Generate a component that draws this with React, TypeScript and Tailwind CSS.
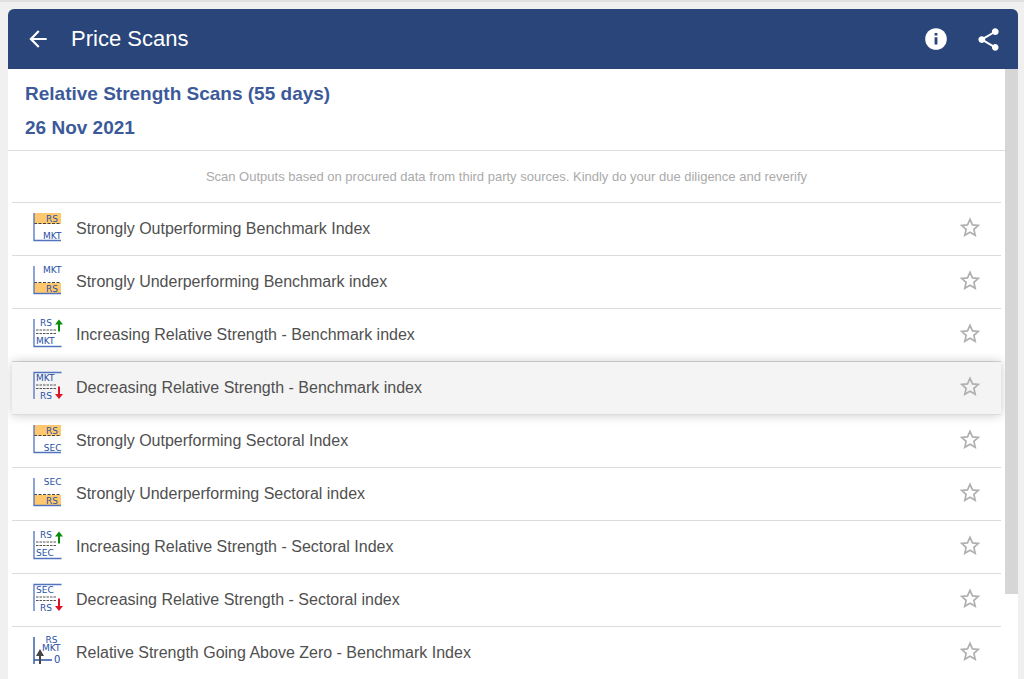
import React from 'react';
import { MdArrowBack, MdShare } from 'react-icons/md';

type IconKind = 'above' | 'below' | 'rising' | 'falling' | 'crossing';

interface Scan {
  title: string;
  kind: IconKind;
  label: string;
  active?: boolean;
}

const scans: Scan[] = [
  { title: 'Strongly Outperforming Benchmark Index', kind: 'above', label: 'MKT' },
  { title: 'Strongly Underperforming Benchmark index', kind: 'below', label: 'MKT' },
  { title: 'Increasing Relative Strength - Benchmark index', kind: 'rising', label: 'MKT' },
  { title: 'Decreasing Relative Strength - Benchmark index', kind: 'falling', label: 'MKT', active: true },
  { title: 'Strongly Outperforming Sectoral Index', kind: 'above', label: 'SEC' },
  { title: 'Strongly Underperforming Sectoral index', kind: 'below', label: 'SEC' },
  { title: 'Increasing Relative Strength - Sectoral Index', kind: 'rising', label: 'SEC' },
  { title: 'Decreasing Relative Strength - Sectoral index', kind: 'falling', label: 'SEC' },
  { title: 'Relative Strength Going Above Zero - Benchmark Index', kind: 'crossing', label: 'MKT' },
];

const InfoIcon: React.FC = () => (
  <svg viewBox="0 0 26 26" className="size-[26px]" aria-hidden="true">
    <circle cx="13" cy="13" r="10.8" fill="#fff" />
    <path d="M11.6 7H14.4V9.6H11.6ZM11.6 11.2H14.4V18.6H11.6Z" fill="#29457a" />
  </svg>
);

const StarIcon: React.FC = () => (
  <svg viewBox="0 0 24 24" className="size-6" aria-hidden="true">
    <path
      d="M12 4.4L14.5 9.9L20.3 10.4L15.9 14.4L17.2 20.3L12 17.3L6.8 20.3L8.1 14.4L3.7 10.4L9.5 9.9Z"
      fill="none"
      stroke="currentColor"
      strokeWidth="1.7"
      strokeMiterlimit="10"
    />
  </svg>
);

const ScanIcon: React.FC<{ kind: IconKind; label: string }> = ({ kind, label }) => (
  <svg
    viewBox="0 0 30 30"
    className="size-[30px] shrink-0 overflow-visible font-['DejaVu_Sans',sans-serif] text-[9px]"
    fill="#2750a4"
    aria-hidden="true"
  >
    {kind === 'above' && (
      <>
        <rect x="2" y="1" width="27" height="11" fill="#ffc86e" />
        <path d="M2 11.5H29" stroke="#444" strokeDasharray="3 1.5" />
        <path d="M2 1V28.5H29" fill="none" stroke="#5273bd" strokeWidth="1.3" />
        <text x="26" y="10" textAnchor="end">RS</text>
        <text x="29.5" y="26.5" textAnchor="end">{label}</text>
      </>
    )}
    {kind === 'below' && (
      <>
        <rect x="2" y="18" width="27" height="10.5" fill="#ffc86e" />
        <path d="M2 17.5H29" stroke="#444" strokeDasharray="3 1.5" />
        <path d="M2 1V28.5H29" fill="none" stroke="#5273bd" strokeWidth="1.3" />
        <text x="29.5" y="8" textAnchor="end">{label}</text>
        <text x="26" y="27" textAnchor="end">RS</text>
      </>
    )}
    {kind === 'rising' && (
      <>
        <path d="M2 1V28.5H29.5" fill="none" stroke="#5273bd" strokeWidth="1.3" />
        <text x="8" y="8">RS</text>
        <path d="M4 12H24M4 15.5H24" stroke="#555" strokeDasharray="2.5 1" />
        <text x="4" y="26">{label}</text>
        <path d="M27 1.5L31 6.5H28V13.5H26V6.5H23Z" fill="#0a8a0a" />
      </>
    )}
    {kind === 'falling' && (
      <>
        <path d="M2 28V1.5H29.5" fill="none" stroke="#5273bd" strokeWidth="1.3" />
        <text x="4" y="10">{label}</text>
        <path d="M4 14H24M4 17.5H24" stroke="#555" strokeDasharray="2.5 1" />
        <text x="8" y="28">RS</text>
        <path d="M27 28L31 23H28V15.5H26V23H23Z" fill="#dc1428" />
      </>
    )}
    {kind === 'crossing' && (
      <>
        <path d="M2 1V28M2 24H20" fill="none" stroke="#2f55a4" strokeWidth="1.4" />
        <text x="13.5" y="7">RS</text>
        <text x="10" y="15">{label}</text>
        <text x="22" y="27" className="text-[10px]">0</text>
        <path d="M8 13L12 20H9V28H7V20H4Z" fill="#444" />
      </>
    )}
  </svg>
);

const ScanRow: React.FC<{ scan: Scan }> = ({ scan }) => (
  <li
    className={`flex h-[53px] shrink-0 items-center border-b border-[#dcdcdc] pr-[19px] pb-1 pl-5 ${
      scan.active ? 'relative bg-[#f4f4f4] shadow-[0_0_10px_rgba(0,0,0,0.22)]' : ''
    }`}
  >
    <a href="#scan" className="flex flex-1 items-center gap-3.5">
      <ScanIcon kind={scan.kind} label={scan.label} />
      <span className="pt-1 text-base text-[#505050]">{scan.title}</span>
    </a>
    <button type="button" aria-label={`Add ${scan.title} to favourites`} className="text-[#b0b0b0]">
      <StarIcon />
    </button>
  </li>
);

const App: React.FC = () => {
  return (
    <div className="flex h-screen flex-col overflow-hidden border-t-2 border-[#e0e0e0] bg-[#f0f0f0] pt-[7px] pr-1.5 pl-2 font-['Liberation_Sans',Arial,sans-serif]">
      <header className="flex h-[60px] shrink-0 items-center rounded-t-md bg-[#29457a] pr-4 pl-[17px] text-white">
        <button type="button" aria-label="Back">
          <MdArrowBack className="size-[26px]" />
        </button>
        <h1 className="ml-5 flex-1 pb-px text-[22px]">Price Scans</h1>
        <div className="flex items-center gap-[26px]">
          <button type="button" aria-label="Information">
            <InfoIcon />
          </button>
          <button type="button" aria-label="Share">
            <MdShare className="size-[27px]" />
          </button>
        </div>
      </header>
      <div className="flex min-h-0 flex-1 bg-white">
        <main className="flex min-w-0 flex-1 flex-col overflow-hidden">
          <div className="shrink-0 border-b border-[#dcdcdc] px-[17px] pt-2 pb-[5px] text-[19px] leading-[34px] font-bold text-[#3c5a9a]">
            <h2>Relative Strength Scans (55 days)</h2>
            <p>26 Nov 2021</p>
          </div>
          <p className="flex h-[51px] shrink-0 items-center justify-center text-[13px] text-[#aaaaaa]">
            Scan Outputs based on procured data from third party sources. Kindly do your due diligence and reverify
          </p>
          <ul className="mr-1 ml-1 flex flex-col border-t border-[#dcdcdc]">
            {scans.map((scan) => (
              <ScanRow key={scan.title} scan={scan} />
            ))}
          </ul>
        </main>
        <div className="w-[13px] shrink-0">
          <div className="h-[86%] bg-[#d6d6d6]" />
        </div>
      </div>
    </div>
  );
};

export default App;
